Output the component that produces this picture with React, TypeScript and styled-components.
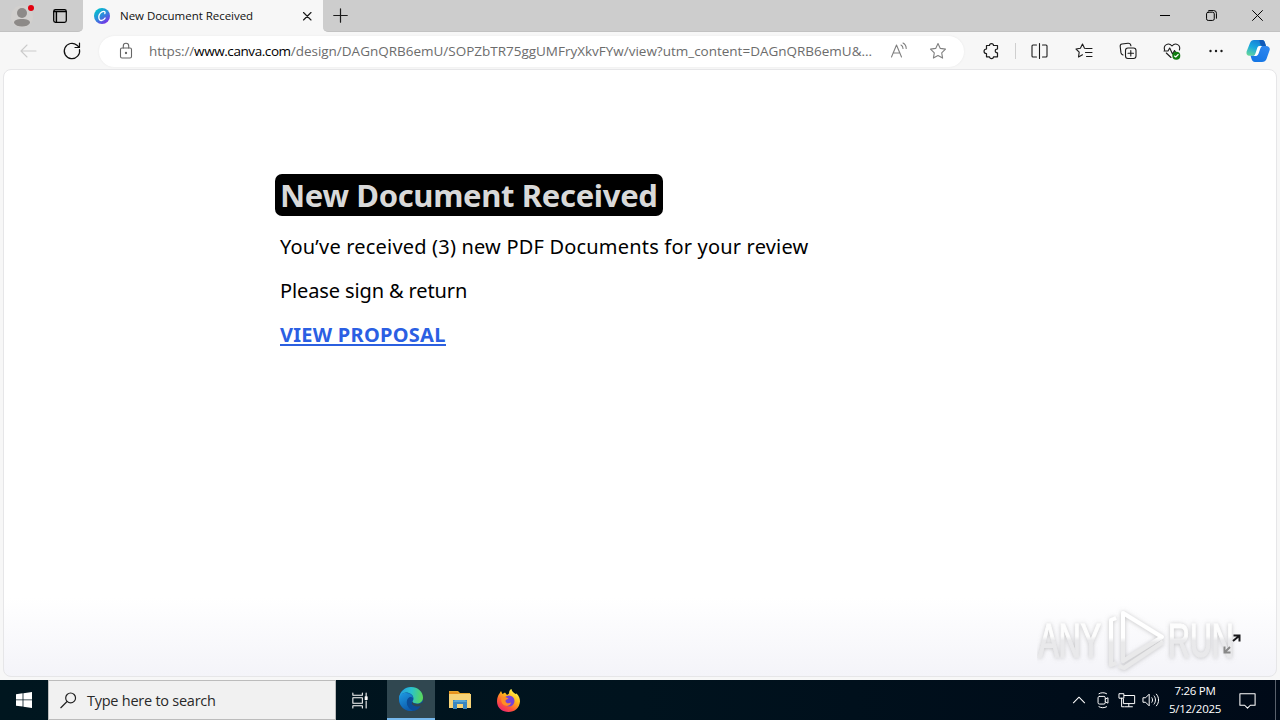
import React from 'react';
import styled, { createGlobalStyle } from 'styled-components';

const uiFont = '"Open Sans", "Noto Sans", sans-serif';

const GlobalStyle = createGlobalStyle`
  * { box-sizing: border-box; }
  body { margin: 0; overflow: hidden; font-family: ${uiFont}; }
  svg { display: block; flex: none; }
`;

const Screen = styled.div`
  width: 1280px;
  height: 720px;
  display: flex;
  flex-direction: column;
  background: #f7f7f7;
`;

const TabStrip = styled.header`
  height: 32px;
  flex: none;
  display: flex;
  background: #f7f7f7;
`;

const ProfileArea = styled.div`
  width: 83px;
  display: flex;
  align-items: center;
  padding-left: 10px;
  gap: 16px;
  background: #cdcdcd;
  border-bottom: 1px solid #c2c2c2;
  border-radius: 0 0 5px 0;
`;

const Tab = styled.div`
  width: 240px;
  display: flex;
  align-items: center;
  padding-left: 11px;
`;

const TabTitle = styled.span`
  width: 182px;
  margin-left: 10px;
  font-size: 11.5px;
  line-height: 16px;
  letter-spacing: -0.03px;
  white-space: nowrap;
  color: #111;
`;

const StripRest = styled.div`
  flex: 1;
  display: flex;
  align-items: center;
  justify-content: space-between;
  padding-left: 10px;
  background: #cdcdcd;
  border-bottom: 1px solid #c2c2c2;
  border-radius: 0 0 0 5px;
`;

const Row = styled.div`
  display: flex;
`;

const Cell = styled.div<{ $w: number }>`
  width: ${({ $w }) => $w}px;
  height: 100%;
  flex: none;
  display: flex;
  align-items: center;
  justify-content: center;
`;

const Toolbar = styled.nav`
  height: 37px;
  flex: none;
  display: flex;
  align-items: center;
  padding: 1px 0 0 6px;
`;

const AddressBar = styled.div`
  width: 865px;
  height: 31px;
  margin: 0 5px;
  display: flex;
  align-items: center;
  padding-left: 17px;
  border-radius: 16px;
  background: #fff;
  box-shadow: 0 0 2px #e6e6e6;
`;

const Url = styled.span`
  width: 730px;
  margin-left: 13px;
  font-size: 13.5px;
  line-height: 20px;
  white-space: nowrap;
  color: #6c6c6c;

  b {
    font-weight: 400;
    color: #000;
  }
`;

const UrlPart = styled.span<{ $track?: number }>`
  letter-spacing: ${({ $track = 0 }) => $track}px;
`;

const Divider = styled.i`
  width: 1px;
  height: 16px;
  margin: 0 1px 0 2px;
  background: #cfcfcf;
`;

const Page = styled.main`
  flex: 1;
  margin: 0 3px 3px;
  padding: 104px 0 0 271px;
  border: 1px solid #e6e6e8;
  border-radius: 8px;
  background: linear-gradient(#fff 0, #fff 87%, #f4f4f9 100%);
  position: relative;
`;

const Heading = styled.h1`
  width: 388px;
  height: 42px;
  margin: 0;
  padding: 0 0 0 5px;
  border-radius: 7px;
  background: #000;
  color: #d9d9d9;
  font-family: "Noto Sans", sans-serif;
  font-size: 31px;
  font-weight: 700;
  line-height: 43px;
  letter-spacing: -0.34px;
  white-space: nowrap;
`;

const Line = styled.p<{ $track: number }>`
  margin: 0 0 0 5px;
  height: 44px;
  font-family: "Noto Sans", sans-serif;
  font-size: 20px;
  line-height: 44px;
  letter-spacing: ${({ $track }) => $track}px;
  white-space: nowrap;
  color: #000;
`;

const Lines = styled.div`
  padding-top: 9px;
`;

const ProposalLink = styled.a`
  display: inline-block;
  line-height: 23px;
  height: 23px;
  border-bottom: 2px solid #2b5fdf;
  color: #2b5fe3;
  font-weight: 700;
`;

const Watermark = styled.svg`
  position: absolute;
  right: 31px;
  bottom: 1px;
`;

const Taskbar = styled.footer`
  height: 40px;
  flex: none;
  display: flex;
  background: linear-gradient(90deg, #00161f 0, #00131e 50%, #000a18 100%);
`;

const SearchBox = styled.div`
  width: 288px;
  display: flex;
  align-items: center;
  gap: 10px;
  padding-left: 11px;
  border: 1px solid #bcbcbc;
  background: #f1f1f1;
  color: #292929;
  font-size: 14.5px;
`;

const SearchText = styled.span`
  letter-spacing: -0.25px;
  white-space: nowrap;
`;

const TaskButton = styled(Cell)<{ $active?: boolean }>`
  background: ${({ $active }) => ($active ? '#304750' : 'transparent')};
  border-bottom: ${({ $active }) => ($active ? '2px solid #76b9ed' : '0')};
`;

const TaskViewButton = styled(TaskButton)`
  padding-right: 4px;
`;

const Tray = styled.div`
  margin-left: auto;
  display: flex;
`;

const Clock = styled.div`
  width: 64px;
  padding-top: 2px;
  font-size: 11.5px;
  line-height: 18px;
  letter-spacing: -0.25px;
  text-align: center;
  white-space: nowrap;
  color: #fff;
`;

const Notifications = styled(Cell)`
  padding-right: 8px;
`;

const ShowDesktop = styled.i`
  width: 5px;
  border-left: 1px solid #59616c;
`;

type IconProps = {
  size?: number;
  color?: string;
  stroke?: number;
  children: React.ReactNode;
};

// every line icon is drawn on a 20x20 grid
const Icon: React.FC<IconProps> = ({ size = 20, color = '#1b1b1b', stroke = 1.1, children }) => (
  <svg
    width={size}
    height={size}
    viewBox="0 0 20 20"
    fill="none"
    stroke={color}
    strokeWidth={stroke}
    strokeLinecap="round"
    strokeLinejoin="round"
  >
    {children}
  </svg>
);

const ProfileIcon = () => (
  <svg width="25" height="24" viewBox="0 0 25 24">
    <circle cx="12" cy="12.5" r="11" fill="#d2d0ce" />
    <circle cx="12" cy="9" r="5" fill="#8d8a88" />
    <path d="M4 19c0-3 3-4 8-4s8 1 8 4c-1.500 2.500-4 3.500-8 3.500S5.500 21.500 4 19z" fill="#8d8a88" />
    <circle cx="21" cy="4" r="3" fill="#e3000f" />
  </svg>
);

const CanvaIcon = () => (
  <svg width="16" height="16" viewBox="0 0 16 16">
    <defs>
      <linearGradient id="canva" x1="0.1" y1="0.1" x2="0.75" y2="1">
        <stop offset="0" stopColor="#00c4cc" />
        <stop offset="0.5" stopColor="#2f88dc" />
        <stop offset="1" stopColor="#7d2ae8" />
      </linearGradient>
    </defs>
    <circle cx="8" cy="8" r="8" fill="url(#canva)" />
    <path d="M10.800 5.600c.6-1 .2-2.200-1.100-2.200C7.300 3.400 4.800 6.200 4.800 9c0 2 .9 3.500 2.700 3.500 1.500 0 2.800-.9 3.600-2.500" fill="none" stroke="#fff" strokeWidth="1.300" strokeLinecap="round" />
  </svg>
);

const CopilotIcon = () => (
  <svg width="24" height="24" viewBox="0 0 24 24">
    <defs>
      <linearGradient id="cpA" x1="0.7" y1="0" x2="0.2" y2="1">
        <stop offset="0" stopColor="#1679d5" />
        <stop offset="0.5" stopColor="#18a7df" />
        <stop offset="1" stopColor="#63d69c" />
      </linearGradient>
      <linearGradient id="cpB" x1="0.8" y1="0" x2="0.3" y2="1">
        <stop offset="0" stopColor="#2f86f0" />
        <stop offset="1" stopColor="#1476e5" />
      </linearGradient>
    </defs>
    <path d="M8 1h8c2 0 2.600 1.500 3.200 3.500L20 7h-3.500c-2 0-2.800 1-3.400 3l-1.500 4.500c-.6 1.500-1.500 2.300-3.200 2.300H3.500C1 16.800 0 15 .6 12.500L4 4c.8-2 2-3 4-3z" fill="url(#cpA)" />
    <path d="M13.500 1H16c2 0 2.600 1.500 3.200 3.500L20 7h-4c-1.500 0-2.500-4-2.500-6z" fill="#1259b8" />
    <path d="M16 23H9c-2 0-3-1.500-3.500-3.200l-.9-3H8.500c1.600 0 2.500-.8 3.100-2.300L13.100 10c.6-2 1.400-3 3.400-3H20c3 0 4.300 2 3.600 4.300L20.500 20c-.8 2-2.200 3-4.500 3z" fill="url(#cpB)" />
    <path d="M12.500 7.200c1-.3 2.200-.2 3.500-.2-1 .8-1.500 2-2 3.500l-1.500 4.200c-.6 1.600-1.700 2.300-3.500 2.300H7.500c1.200-.8 1.700-1.800 2.200-3.300l1.300-4c.4-1.300.8-2.200 1.500-2.500z" fill="#fff" />
  </svg>
);

const EdgeIcon = () => (
  <svg width="26" height="26" viewBox="0 0 26 26">
    <defs>
      <linearGradient id="edTop" x1="0" y1="0.4" x2="1" y2="0.5">
        <stop offset="0" stopColor="#249ce0" />
        <stop offset="0.5" stopColor="#2bc2cc" />
        <stop offset="1" stopColor="#5bd957" />
      </linearGradient>
      <linearGradient id="edLow" x1="0" y1="0" x2="0.5" y2="1">
        <stop offset="0" stopColor="#1e9be3" />
        <stop offset="1" stopColor="#0d5cad" />
      </linearGradient>
    </defs>
    <circle cx="13" cy="13" r="12" fill="#0c509d" />
    <path d="M1 13C1 8 4 7 8 7c5 0 7.500 3.500 7.500 6 0-1-1-2-2.500-2-3 0-5 3-4 7 1 3.500 4 6.500 7 6.600C8 26.500 1 21 1 13z" fill="url(#edLow)" />
    <path d="M1 12.500C1.500 5.500 7 1 13 1c7 0 12 5 12 10.500 0 4-3 6-6 6-2.500 0-4.500-.9-4.500-2 0-.7 1-1 1-3C15.500 9 12 6.500 8 6.500c-3.500 0-6 2-7 6z" fill="url(#edTop)" />
    <path d="M14.500 15.500c0 1.500 2 2.500 4.500 2.500 2 0 3.500-.5 5-1.500l1 3-1 3-6 1c-4-1-5.500-5-3.500-8z" fill="#304750" />
    <path d="M9 17c0-3 1.500-5.500 4-6-1 1.500-.8 4 .2 6 1.500 3 5 4 9.500 3-1.500 2.500-4 4.500-7 4.700C12 24 9 20 9 17z" fill="#0c4d98" />
  </svg>
);

const FolderIcon = () => (
  <svg width="24" height="22" viewBox="0 0 24 22">
    <path d="M1 2h9l2 2h10v4H1z" fill="#e8a72c" />
    <path d="M1 5h22v14H1z" fill="#f7d377" />
    <path d="M1 3h8l2 2H1z" fill="#e8921e" />
    <path d="M5 11h14v9h-4v-5H9v5H5z" fill="#3a86bf" />
    <path d="M7 11h10l2 2H5z" fill="#58a6d5" />
    <path d="M9 15h6v4H9z" fill="#f7d377" />
  </svg>
);

const FirefoxIcon = () => (
  <svg width="25" height="25" viewBox="0 0 25 25">
    <defs>
      <linearGradient id="ffx" x1="0.8" y1="0.1" x2="0.2" y2="1">
        <stop offset="0" stopColor="#fff14a" />
        <stop offset="0.35" stopColor="#ffb31a" />
        <stop offset="0.68" stopColor="#ff5638" />
        <stop offset="1" stopColor="#e91e78" />
      </linearGradient>
    </defs>
    <path d="M3.500 5.500 5 3l1.500 3L9 4.500 11 7l2-1.500C13 3 14 1.500 15.500 1c.3 2.500 2.300 3.500 4 5l1-.4C23 8 24 10.500 24 13.500 23.500 20 18.500 24 12.500 24S1 20 1 13.500C1 10 2 7.500 3.500 5.500z" fill="url(#ffx)" />
    <circle cx="13" cy="13" r="5.500" fill="#7542d8" />
    <path d="M5.500 9.500c3-1 5-.5 7 1-1 1-3.300 1-3 2.700.5 2 3 2.700 5.500 1.300-.5 3-3.500 4-6 3-3-1-4.500-4.500-3.500-8z" fill="#ff8e25" />
  </svg>
);

const AnyRunMark = () => (
  <Watermark width="208" height="70" viewBox="0 0 208 70">
    <defs>
      <linearGradient id="wm" x1="0" y1="5" x2="0" y2="65" gradientUnits="userSpaceOnUse">
        <stop offset="0.46" stopColor="#ffffff" />
        <stop offset="0.54" stopColor="#e9e9ea" />
      </linearGradient>
      {/* the words have their own origin at the baseline */}
      <linearGradient id="wmWord" x1="0" y1="-36" x2="0" y2="0" gradientUnits="userSpaceOnUse">
        <stop offset="0.42" stopColor="#fdfdfd" />
        <stop offset="0.54" stopColor="#e9e9eb" />
      </linearGradient>
      <filter id="wmShadow" x="-10%" y="-20%" width="120%" height="140%">
        <feDropShadow dx="0" dy="0.500" stdDeviation="2" floodColor="#888" floodOpacity="0.5" />
      </filter>
    </defs>
    <g filter="url(#wmShadow)" fontFamily="'Liberation Sans', sans-serif" fontSize="49">
      <g fill="url(#wmWord)" stroke="url(#wmWord)" strokeWidth="1.200">
        <text transform="translate(1.5 52) scale(.62 1)">ANY</text>
        <text transform="translate(131 52) scale(.62 1)">RUN</text>
      </g>
      <g fill="none" stroke="url(#wm)" strokeWidth="4" strokeLinejoin="round">
        <path d="M86 8l39 24-39 24z" />
        <path d="M79 13l-5 2v45l5-2" />
        <path d="M82 61l5 2 39-26" />
      </g>
    </g>
    <g stroke="#18181b" strokeWidth="2" fill="none">
      <path d="M196 36l6-5M196.500 30.500h6v6" />
      <path d="M193 42l-5 5M187.500 41.500v6h6" stroke="#888" />
    </g>
  </Watermark>
);

const App: React.FC = () => (
  <>
    <GlobalStyle />
    <Screen>
      <TabStrip>
        <ProfileArea>
          <ProfileIcon />
          <Icon size={18} color="#000" stroke={1.4}>
            <rect x="3" y="3" width="14" height="14" rx="2" />
            <path d="M3.500 5h13M6 5v12" strokeWidth="1.600" />
          </Icon>
        </ProfileArea>
        <Tab>
          <CanvaIcon />
          <TabTitle>New Document Received</TabTitle>
          <Icon size={10} stroke={2.3}><path d="M3 3l15 15M18 3L3 18" /></Icon>
        </Tab>
        <StripRest>
          <Icon size={15} stroke={1.6}><path d="M10 1v18M1 10h18" /></Icon>
          <Row>
            <Cell $w={46}><Icon size={10} color="#000" stroke={2}><path d="M0 11h20" /></Icon></Cell>
            <Cell $w={46}>
              <Icon size={11} color="#000" stroke={1.8}>
                <rect x="1" y="4" width="14" height="15" rx="3" />
                <path d="M5 1h9a5 5 0 0 1 5 5v9" />
              </Icon>
            </Cell>
            <Cell $w={46}><Icon size={11} color="#000" stroke={1.8}><path d="M1 1l18 18M19 1L1 19" /></Icon></Cell>
          </Row>
        </StripRest>
      </TabStrip>

      <Toolbar>
        <Cell $w={44}><Icon color="#cbcbcb"><path d="M18 10H3M9 4l-6 6 6 6" /></Icon></Cell>
        <Cell $w={44}>
          <Icon color="#111" stroke={1.2}><path d="M17.500 8.500A7.700 7.700 0 1 1 15 4.200L17 6M17.500 2v4.500H13" /></Icon>
        </Cell>
        <AddressBar>
          <Icon color="#666">
            <rect x="4.500" y="7" width="11" height="10" rx="1.500" />
            <path d="M7.300 7V5a2.700 2.700 0 0 1 5.400 0v2" />
            <circle cx="10" cy="12" r="0.600" fill="#666" />
          </Icon>
          <Url>
            <UrlPart $track={-0.12}>https://</UrlPart>
            <b><UrlPart $track={-0.42}>www.canva.com</UrlPart></b>
            <UrlPart $track={-0.01}>/design/DAGnQRB6emU/SOPZbTR75ggUMFryXkvFYw/view?utm_content=DAGnQRB6emU&amp;...</UrlPart>
          </Url>
          <Cell $w={39}>
            <Icon color="#808080">
              <path d="M2.500 16L7.500 4l5 12M4 12h7" />
              <path d="M12 4c1.500.7 2 1.700 2 3.500M14 2c2.200 1.200 3.200 3 3.200 5.500" />
            </Icon>
          </Cell>
          <Cell $w={40}>
            <Icon color="#808080">
              <path d="M10 2.500l2.300 4.900 5.200.7-3.800 3.700.9 5.300L10 14.600l-4.600 2.500.9-5.300-3.800-3.700 5.200-.7z" />
            </Icon>
          </Cell>
        </AddressBar>
        <Cell $w={44}>
          <Icon stroke={1.2}>
            <path d="M5.500 4.500H8.500c0-2.600 4-2.600 4 0h4V8c-3-.2-3 4 0 3.800v4h-4c0 2.400-4 2.400-4 0H5.500V12.500c-3.300 0-3.300-4.500 0-4.500z" />
          </Icon>
        </Cell>
        <Divider />
        <Cell $w={44}>
          <Icon><path d="M7.500 4H4a1 1 0 0 0-1 1v10a1 1 0 0 0 1 1h3.500M13.500 4H17a1 1 0 0 1 1 1v10a1 1 0 0 1-1 1h-3.500M10.500 2.500v15" /></Icon>
        </Cell>
        <Cell $w={45}>
          <Icon><path d="M12.500 7.500L10.500 7.200 8.500 3 6.400 7.200 2 8l3.200 3.200L4.500 16l4-2.200M12.500 7.500H18M11.500 11.500H18M12.500 15.500H18" /></Icon>
        </Cell>
        <Cell $w={44}>
          <Icon>
            <rect x="7.500" y="7" width="10.500" height="10.500" rx="2.500" />
            <path d="M12.800 9.500v5.500M10 12.200h5.500M5 14l-.8-.4c-.8-.5-1-1-1.200-1.700L2.200 5.500C2 4 2.800 3.200 4 3l6-.8c1.500-.1 2.400.6 2.700 1.800l.2.800" />
          </Icon>
        </Cell>
        <Cell $w={44}>
          <Icon>
            <path d="M2.600 9C1 4 6.500 1 10 5c3.500-4 9-1 7.400 4M4.300 12L9 16.500M2 10h4l1.700-3 2.800 6 2-3.500L13.500 11" />
            <circle cx="14.300" cy="14.700" r="4" fill="#107c10" stroke="none" />
            <path d="M12.500 15l1.200 1 2.500-2.500" stroke="#fff" />
          </Icon>
        </Cell>
        <Cell $w={44}>
          <Icon>
            <g fill="#1b1b1b" stroke="none">
              <circle cx="4.500" cy="10" r="1.200" />
              <circle cx="10" cy="10" r="1.200" />
              <circle cx="15.500" cy="10" r="1.200" />
            </g>
          </Icon>
        </Cell>
        <Cell $w={40}><CopilotIcon /></Cell>
      </Toolbar>

      <Page>
        <Heading>New Document Received</Heading>
        <Lines>
          <Line $track={0.19}>You’ve received (3) new PDF Documents for your review</Line>
          <Line $track={-0.12}>Please sign &amp; return</Line>
          <Line $track={0.27}><ProposalLink>VIEW PROPOSAL</ProposalLink></Line>
        </Lines>
        <AnyRunMark />
      </Page>

      <Taskbar>
        <Cell $w={48}>
          <svg width="16" height="16" viewBox="0 0 16 16" fill="#fff">
            <path d="M0 2.200L6.600 1.300v6.200H0zM7.400 1.200L16 0v7.500H7.400zM0 8.300h6.600v6.300L0 13.700zM7.400 8.300H16V16l-8.600-1.200z" />
          </svg>
        </Cell>
        <SearchBox>
          <Icon size={17} color="#222" stroke={1.4}>
            <circle cx="12.500" cy="7" r="5.800" />
            <path d="M8.300 11.200L1 18.500" />
          </Icon>
          <SearchText>Type here to search</SearchText>
        </SearchBox>
        <TaskViewButton $w={51}>
          <Icon size={19} color="#fff">
            <path d="M3 2v2.500h10V2M3 18v-2.500h10V18M3 7h10v6H3zM17 2v3M17 10.500V18" />
            <path d="M16 6h2v3h-2z" fill="#fff" />
          </Icon>
        </TaskViewButton>
        <TaskButton $w={48} $active><EdgeIcon /></TaskButton>
        <TaskButton $w={49}><FolderIcon /></TaskButton>
        <TaskButton $w={49}><FirefoxIcon /></TaskButton>
        <Tray>
          <Cell $w={24}><Icon size={14} color="#fff" stroke={1.5}><path d="M2 14l8-8 8 8" /></Icon></Cell>
          <Cell $w={24}>
            <Icon size={18} color="#fff">
              <rect x="4.500" y="6" width="8" height="8.500" rx="1.500" />
              <path d="M12.500 9l3-1.500v6l-3-1.500M5.500 3c2.500-1.500 6-1.500 8.500 0M5.500 17.500c2.500 1.500 6 1.500 8.500 0" />
            </Icon>
          </Cell>
          <Cell $w={24}>
            <Icon size={18} color="#fff">
              <path d="M7 5h11.500v9H6V9M12 14v3M8 17.500h8M1.500 3h5v5h-5zM4 8v9.500h3" />
            </Icon>
          </Cell>
          <Cell $w={24}>
            <Icon size={18} color="#fff">
              <path d="M1.500 7.500H4l4-4v13l-4-4H1.500zM11 7.500c1 1.500 1 3.500 0 5M13.500 5.500c2 2.500 2 6.500 0 9M16 3.500c3.300 3.800 3.300 9.200 0 13" />
            </Icon>
          </Cell>
          <Clock>7:26 PM<br />5/12/2025</Clock>
          <Notifications $w={48}>
            <Icon size={19} color="#fff"><path d="M2 3h16v12h-5l-3 3-3-3H2z" /></Icon>
          </Notifications>
          <ShowDesktop />
        </Tray>
      </Taskbar>
    </Screen>
  </>
);

export default App;
